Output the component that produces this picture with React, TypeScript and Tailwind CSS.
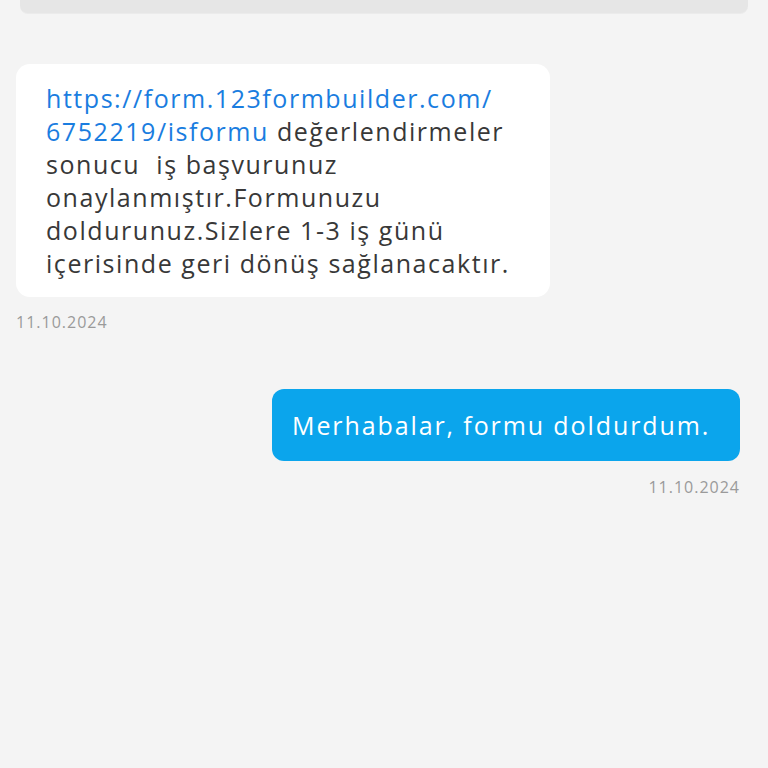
import React from 'react';

const font = { fontFamily: '"Open Sans", "Noto Sans", sans-serif' };

const App: React.FC = () => {
  return (
    <div className="min-h-[768px] w-full bg-[#f4f4f4] overflow-hidden" style={font}>
      {/* top card remnant */}
      <div className="mx-[20px] h-[14px] rounded-b-[8px] bg-[#e6e6e6] border-b border-[#ebebeb]" />

      <div className="px-[16px] pt-[50px]">
        {/* incoming message */}
        <div className="flex flex-col items-start">
          <div className="w-[534px] rounded-[14px] bg-white pl-[30px] pr-[10px] pt-[18px] pb-[17px] text-[25px] leading-[33px] tracking-[1.55px] text-[#383838] whitespace-pre">
            <span className="text-[#1a7de0]">https://form.123formbuilder.com/</span>
            <br />
            <span className="text-[#1a7de0]">6752219/isformu</span> değerlendirmeler
            <br />
            sonucu  iş başvurunuz
            <br />
            onaylanmıştır.Formunuzu
            <br />
            doldurunuz.Sizlere 1-3 iş günü
            <br />
            içerisinde geri dönüş sağlanacaktır.
          </div>
          <span className="mt-[15px] text-[16px] leading-[20px] tracking-[1px] text-[#9a9a9a]">11.10.2024</span>
        </div>

        {/* outgoing message */}
        <div className="mt-[57px] flex flex-col items-end pr-[12px]">
          <div className="w-[468px] rounded-[12px] bg-[#0ba5ec] px-[20px] py-[19px] text-[25px] leading-[34px] tracking-[1.9px] text-white whitespace-nowrap">
            Merhabalar, formu doldurdum.
          </div>
          <span className="mt-[16px] text-[16px] leading-[20px] tracking-[1px] text-[#9a9a9a]">11.10.2024</span>
        </div>
      </div>
    </div>
  );
};

export default App;
